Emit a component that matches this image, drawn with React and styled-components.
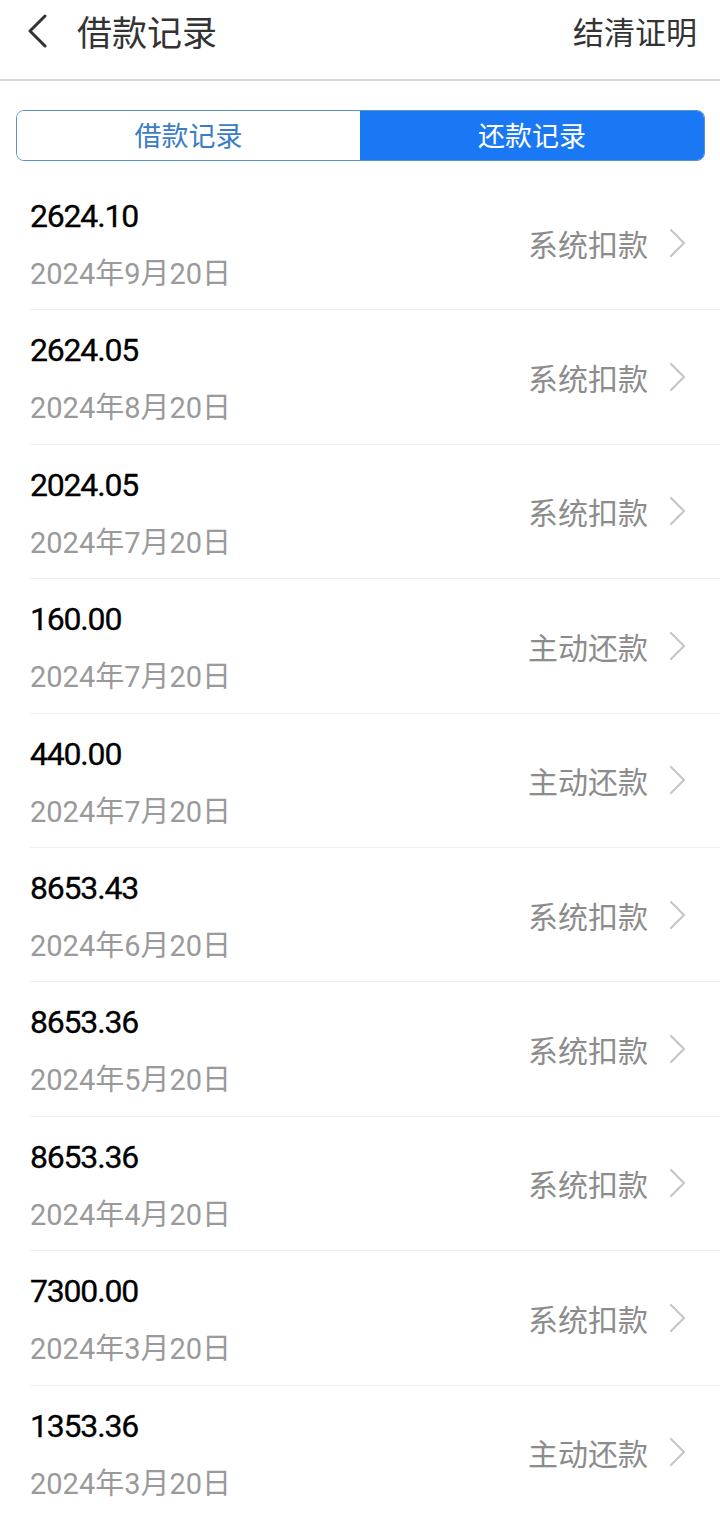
import React from "react";
import styled, { createGlobalStyle } from "styled-components";

const Global = createGlobalStyle`
  html, body { margin: 0; padding: 0; background: #fff; }
  body { font-family: "Roboto", "Noto Sans CJK SC", sans-serif; }
  * { box-sizing: border-box; }
`;

const Page = styled.div`
  width: 720px;
  min-height: 1519px;
  background: #fff;
  overflow: hidden;
`;

const Header = styled.header`
  height: 81px;
  display: flex;
  align-items: center;
  padding: 0 23px 18px 26px;
  border-bottom: 2px solid #d9d9d9;
`;

const BackBtn = styled.button`
  border: none;
  background: none;
  padding: 0;
  width: 24px;
  height: 34px;
  display: flex;
  align-items: center;
  cursor: pointer;
`;

const Title = styled.h1`
  margin: 0 0 0 27px;
  flex: 1;
  font-family: "Noto Sans CJK SC", sans-serif;
  font-weight: 400;
  font-size: 35px;
  line-height: 40px;
  color: #333;
`;

const HeaderAction = styled.span`
  font-family: "Noto Sans CJK SC", sans-serif;
  font-size: 31px;
  line-height: 40px;
  color: #333;
`;

const Tabs = styled.div`
  margin: 29px 15px 0 16px;
  height: 51px;
  display: grid;
  grid-template-columns: 343px 1fr;
  border: 1.5px solid #5b90d2;
  border-radius: 8px;
  overflow: hidden;
`;

const Tab = styled.button`
  border: none;
  margin: 0;
  padding: 0 0 2px;
  font-family: "Noto Sans CJK SC", sans-serif;
  font-size: 27px;
  background: ${(p) => (p.$active ? "#1a78f4" : "#fff")};
  color: ${(p) => (p.$active ? "#fff" : "#3b7cc6")};
  cursor: pointer;
`;

const List = styled.ul`
  list-style: none;
  margin: 15px 0 0;
  padding: 0;
`;

const Row = styled.li`
  height: 134.4px;
  margin-left: 30px;
  padding-right: 32px;
  display: flex;
  align-items: center;
  border-bottom: 1px solid #efefef;
`;

const Left = styled.div`
  flex: 1;
  display: flex;
  flex-direction: column;
  align-self: stretch;
  padding-top: 20px;
`;

const Amount = styled.div`
  font-family: "Roboto", sans-serif;
  font-weight: 400;
  font-size: 32px;
  line-height: 40px;
  letter-spacing: -1.2px;
  color: #000;
  -webkit-text-stroke: 0.3px #000;
`;

const DateText = styled.div`
  margin-top: 18px;
  font-family: "Roboto", "Noto Sans CJK SC", sans-serif;
  font-size: 29px;
  line-height: 40px;
  color: #9a9a9a;
`;

const Kind = styled.span`
  font-family: "Noto Sans CJK SC", sans-serif;
  font-size: 30px;
  line-height: 40px;
  color: #8c8c8c;
  margin-right: 20px;
`;

const Chevron = ({ color = "#c6c6c6", w = 20, h = 30, sw = 2.2 }) => (
  <svg width={w} height={h} viewBox="0 0 20 30" fill="none">
    <path d="M3 2 L16 15 L3 28" stroke={color} strokeWidth={sw} strokeLinecap="round" strokeLinejoin="round" />
  </svg>
);

const BackIcon = () => (
  <svg width="22" height="34" viewBox="0 0 22 34" fill="none">
    <path d="M19 2 L4 17 L19 32" stroke="#333" strokeWidth="3" strokeLinecap="round" strokeLinejoin="round" />
  </svg>
);

const records = [
  ["2624.10", "2024年9月20日", "系统扣款"],
  ["2624.05", "2024年8月20日", "系统扣款"],
  ["2024.05", "2024年7月20日", "系统扣款"],
  ["160.00", "2024年7月20日", "主动还款"],
  ["440.00", "2024年7月20日", "主动还款"],
  ["8653.43", "2024年6月20日", "系统扣款"],
  ["8653.36", "2024年5月20日", "系统扣款"],
  ["8653.36", "2024年4月20日", "系统扣款"],
  ["7300.00", "2024年3月20日", "系统扣款"],
  ["1353.36", "2024年3月20日", "主动还款"],
];

export default function App() {
  return (
    <Page>
      <Global />
      <Header>
        <BackBtn aria-label="返回">
          <BackIcon />
        </BackBtn>
        <Title>借款记录</Title>
        <HeaderAction>结清证明</HeaderAction>
      </Header>
      <Tabs>
        <Tab>借款记录</Tab>
        <Tab $active>还款记录</Tab>
      </Tabs>
      <List>
        {records.map(([amt, date, kind], i) => (
          <Row key={i}>
            <Left>
              <Amount>{amt}</Amount>
              <DateText>{date}</DateText>
            </Left>
            <Kind>{kind}</Kind>
            <Chevron />
          </Row>
        ))}
      </List>
    </Page>
  );
}
